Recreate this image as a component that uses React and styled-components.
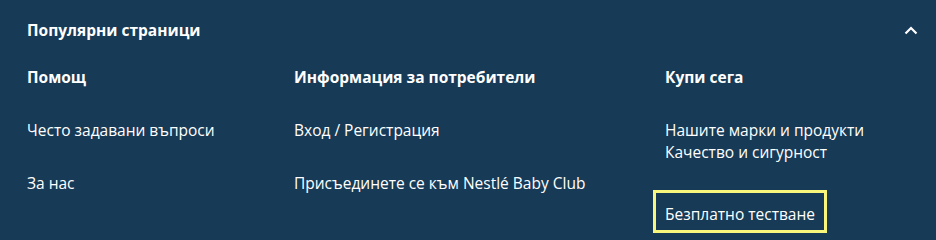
import React from 'react';
import styled, { createGlobalStyle } from 'styled-components';

const Global = createGlobalStyle`
  html, body { margin: 0; padding: 0; background: #173a56; }
  body { font-family: "Open Sans", "Noto Sans", sans-serif; color: #fff; }
`

const Footer = styled.section`
  width: 936px;
  height: 240px;
  background: #173a56;
  box-sizing: border-box;
  padding: 19px 18px 0 27px;
  overflow: hidden;
`
const Head = styled.div`
  display: flex;
  align-items: center;
  justify-content: space-between;
  height: 22px;
  margin-bottom: 25px;
`
const Title = styled.h2`
  margin: 0;
  font-size: 15.5px;
  font-weight: 700;
  line-height: 22px;
`
const Toggle = styled.button`
  display: flex;
  padding: 0;
  border: none;
  background: none;
  color: #fff;
`
const Columns = styled.div`
  display: grid;
  grid-template-columns: 267px 371px 1fr;
`
const Column = styled.div`
  display: flex;
  flex-direction: column;
`
const ColTitle = styled.h3`
  margin: 0 0 31px;
  font-size: 15.5px;
  font-weight: 700;
  line-height: 22px;
`
const List = styled.ul`
  margin: 0;
  padding: 0;
  list-style: none;
  display: flex;
  flex-direction: column;
  gap: ${({ $gap }) => $gap}px;
`
const Item = styled.li`
  font-size: 15.5px;
  line-height: 22px;
  margin-top: ${({ $top }) => $top || 0}px;
`
const Link = styled.a`
  color: #fff;
  text-decoration: none;
  display: inline-block;
  ${({ $focus }) => $focus && `
    margin-left: -12px;
    padding: 10px 9px 5px;
    border: 3px solid #f9f67c;
  `}
`

function Chevron() {
  return (
    <svg width="14" height="9" viewBox="0 0 14 9" fill="none">
      <path d="M1.5 7.5 L7 2 L12.5 7.5" stroke="#fff" strokeWidth="2.2" />
    </svg>
  )
}

const cols = [
  { title: 'Помощ', gap: 31, items: ['Често задавани въпроси', 'За нас'] },
  { title: 'Информация за потребители', gap: 31, items: ['Вход / Регистрация', 'Присъединете се към Nestlé Baby Club'] },
]

export default function App() {
  return (
    <Footer>
      <Global />
      <Head>
        <Title>Популярни страници</Title>
        <Toggle aria-label="Свий"><Chevron /></Toggle>
      </Head>
      <Columns>
        {cols.map((c) => (
          <Column key={c.title}>
            <ColTitle>{c.title}</ColTitle>
            <List $gap={c.gap}>
              {c.items.map((t) => (
                <Item key={t}><Link href="#">{t}</Link></Item>
              ))}
            </List>
          </Column>
        ))}
        <Column>
          <ColTitle>Купи сега</ColTitle>
          <List $gap={0}>
            <Item><Link href="#">Нашите марки и продукти</Link></Item>
            <Item><Link href="#">Качество и сигурност</Link></Item>
            <Item $top={27}><Link href="#" $focus>Безплатно тестване</Link></Item>
          </List>
        </Column>
      </Columns>
    </Footer>
  )
}
